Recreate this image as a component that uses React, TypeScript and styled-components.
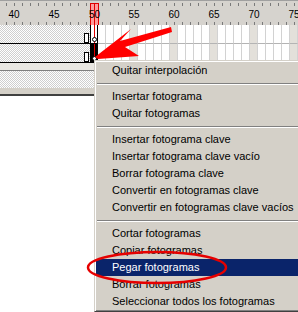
import React from "react";
import styled, { createGlobalStyle } from "styled-components";

const GlobalStyle = createGlobalStyle`
  html, body {
    margin: 0;
    padding: 0;
    background: #fff;
    overflow: hidden;
  }
  body {
    font-family: "Liberation Sans", Tahoma, Arial, sans-serif;
  }
`;

const checker = "repeating-conic-gradient(#cfcfcf 0 25%, #fff 0 50%) 0 0 / 2px 2px";

const Screen = styled.div`
  position: relative;
  width: 298px;
  height: 312px;
  overflow: hidden;
  background: #fff;
`;

const Timeline = styled.div`
  display: flex;
  flex-direction: column;
`;

const Ruler = styled.div`
  display: flex;
  height: 24px;
  padding-left: 2px;
  background: #d6d3ce;
  border-top: 1px solid #a0a0a0;
`;

const RulerCell = styled.div`
  flex: none;
  width: 8px;
  display: flex;
  justify-content: center;
  align-items: center;
  padding-top: 2px;
  font-size: 10px;
  color: #000;
  white-space: nowrap;
  background:
    linear-gradient(#7a7a7a, #7a7a7a) no-repeat 4px 2px / 1px 3px,
    linear-gradient(#7a7a7a, #7a7a7a) no-repeat 4px 100% / 1px 3px;
`;

const HeadCell = styled(RulerCell)`
  position: relative;
  z-index: 1;
  box-sizing: border-box;
  width: 9px;
  margin-right: -1px;
  margin-top: 2px;
  padding-top: 0;
  border: 1px solid #e00000;
  border-bottom: none;
  background: linear-gradient(#e00000, #e00000) no-repeat 3px 0 / 1px 100%, #ff9c9c;
`;

const Row = styled.div`
  display: flex;
  height: 19px;
`;

const Span = styled.div`
  flex: none;
  width: 90px;
  box-sizing: border-box;
  border-bottom: 1px solid #000;
  background: ${checker};
  display: flex;
  justify-content: flex-end;
  align-items: flex-end;
  padding-right: 1px;
`;

const EndMark = styled.div`
  width: 5px;
  height: 10px;
  box-sizing: border-box;
  border: 1px solid #000;
  background: #fff;
`;

const Frame = styled.div<{ $mark?: boolean }>`
  flex: none;
  width: 8px;
  box-sizing: border-box;
  border-right: 1px solid #d2d2d2;
  border-bottom: 1px solid #b4b4b4;
  background: ${(p) => (p.$mark ? "#e3e0da" : "#fff")};
`;

const KeyFrame = styled.div<{ $filled?: boolean }>`
  flex: none;
  width: 8px;
  box-sizing: border-box;
  border: 1px solid #000;
  border-top: none;
  background:
    linear-gradient(#e00000, #e00000) no-repeat 3px 0 / 1px 100%,
    ${(p) => (p.$filled ? "#000" : "#fff")};
  display: flex;
  align-items: flex-end;
  padding: 0 0 1px 1px;
`;

const Dot = styled.div`
  width: 5px;
  height: 5px;
  box-sizing: border-box;
  border: 1px solid #000;
  border-radius: 50%;
  background: #fff;
`;

const Band = styled.div`
  height: 7px;
  background: #e9e7e2;
  border-bottom: 1px solid #808080;
`;

const HatchBar = styled.div`
  height: 17px;
  background: ${checker};
`;

const Gutter = styled.div`
  height: 6px;
  background: #d4d0c8;
  border-bottom: 2px solid #404040;
`;

const Menu = styled.div`
  position: absolute;
  top: 60px;
  left: 94px;
  width: 220px;
  padding: 1px;
  background: #d4d0c8;
  border: 1px solid;
  border-color: #d4d0c8 #404040 #404040 #d4d0c8;
  box-shadow: inset 1px 1px #fff, inset -1px -1px #808080;
  font-size: 11px;
`;

const Item = styled.div<{ $active?: boolean }>`
  height: 17px;
  line-height: 17px;
  padding-left: 16px;
  white-space: nowrap;
  color: ${(p) => (p.$active ? "#fff" : "#000")};
  background: ${(p) => (p.$active ? "#0a246a" : "transparent")};
`;

const Separator = styled.div`
  height: 9px;
  display: flex;
  align-items: center;
  padding: 0 1px;

  &::before {
    content: "";
    flex: 1;
    border-top: 1px solid #808080;
    border-bottom: 1px solid #fff;
  }
`;

const Marks = styled.svg`
  position: absolute;
  top: 0;
  left: 0;
  pointer-events: none;
`;

const range = (from: number, to: number) =>
  Array.from({ length: to - from + 1 }, (_, i) => from + i);

const HEAD = 50;

const menu: (string | null)[] = [
  "Quitar interpolación",
  null,
  "Insertar fotograma",
  "Quitar fotogramas",
  null,
  "Insertar fotograma clave",
  "Insertar fotograma clave vacío",
  "Borrar fotograma clave",
  "Convertir en fotogramas clave",
  "Convertir en fotogramas clave vacíos",
  null,
  "Cortar fotogramas",
  "Copiar fotogramas",
  "Pegar fotogramas",
  "Borrar fotogramas",
  "Seleccionar todos los fotogramas",
];

const Layer: React.FC<{ filled?: boolean }> = ({ filled }) => (
  <Row>
    <Span>
      <EndMark />
    </Span>
    <KeyFrame $filled={filled}>
      <Dot />
    </KeyFrame>
    {range(HEAD + 1, 76).map((n) => (
      <Frame key={n} $mark={n % 5 === 0} />
    ))}
  </Row>
);

export default function App() {
  return (
    <Screen>
      <GlobalStyle />
      <Timeline>
        <Ruler>
          {range(39, 76).map((n) =>
            n === HEAD ? (
              <HeadCell key={n}>{n}</HeadCell>
            ) : (
              <RulerCell key={n}>{n % 5 === 0 ? n : null}</RulerCell>
            )
          )}
        </Ruler>
        <Layer />
        <Layer filled />
        <Band />
        <HatchBar />
        <Gutter />
      </Timeline>

      <Menu>
        {menu.map((label, i) =>
          label === null ? (
            <Separator key={i} />
          ) : (
            <Item key={i} $active={label === "Pegar fotogramas"}>
              {label}
            </Item>
          )
        )}
      </Menu>

      <Marks width="298" height="312" viewBox="0 0 298 312">
        <polygon
          points="95,57 131,29 120,41 171,27 172,32 125,47 139,56 98,59"
          fill="#ff0000"
        />
        <ellipse
          cx="157"
          cy="267.5"
          rx="69"
          ry="15.5"
          fill="none"
          stroke="#e60000"
          strokeWidth="2.5"
        />
      </Marks>
    </Screen>
  );
}
